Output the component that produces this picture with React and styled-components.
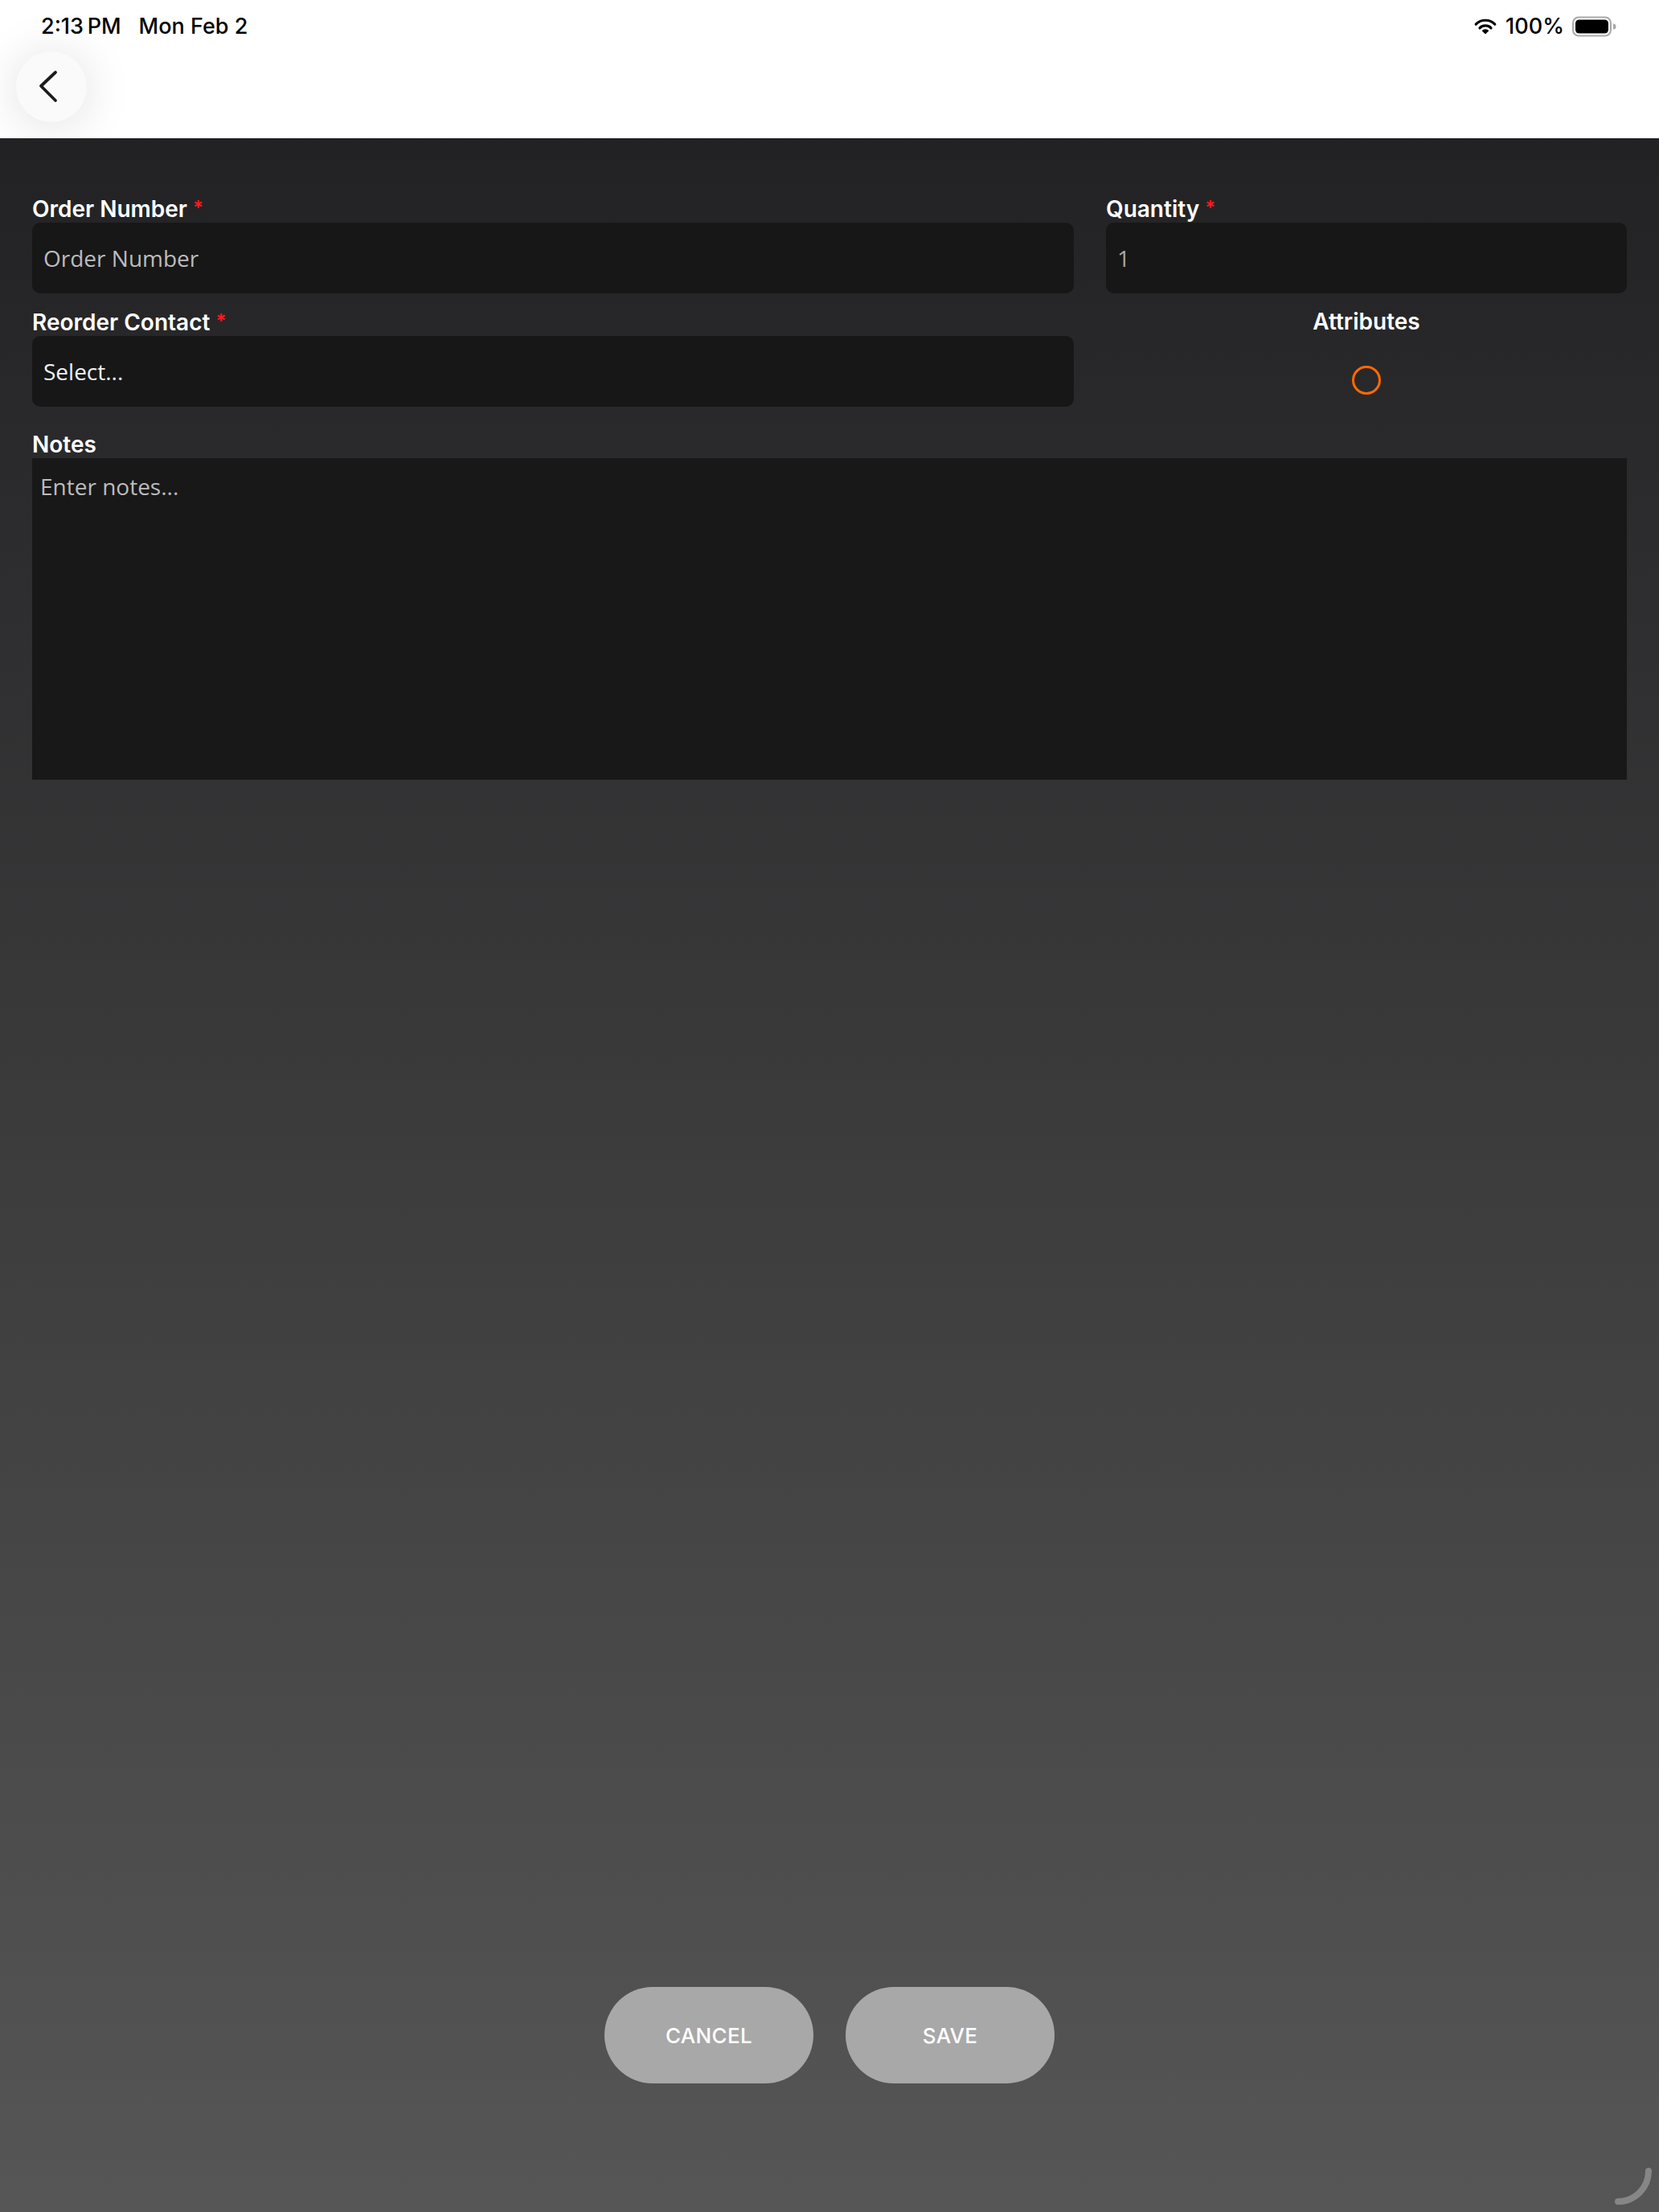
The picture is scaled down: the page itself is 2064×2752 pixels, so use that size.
import React from 'react';
import styled, { createGlobalStyle } from 'styled-components';

const GlobalStyle = createGlobalStyle`
  * {
    box-sizing: border-box;
  }
  html, body {
    margin: 0;
    padding: 0;
    height: 100%;
  }
  body {
    font-family: Inter, 'Noto Sans', sans-serif;
    background: #ffffff;
  }
  #root {
    height: 100%;
  }
`;

export default function App() {
  return (
    <>
      <GlobalStyle />
      <Page>
        <Header>
          <StatusBar>
            <StatusGroup>
              <span>2:13&#8201;PM</span>
              <span>Mon Feb 2</span>
            </StatusGroup>
            <StatusGroup $tight>
              <WifiIcon />
              <span>100%</span>
              <BatteryIcon />
            </StatusGroup>
          </StatusBar>
          <NavRow>
            <BackButton aria-label='Back'>
              <svg width='30' height='44' viewBox='0 0 30 44'>
                <path
                  d='M22 4 L4 21 L22 39'
                  fill='none'
                  stroke='#1c1c1c'
                  strokeWidth='3.8'
                  strokeLinecap='round'
                  strokeLinejoin='round'
                />
              </svg>
            </BackButton>
          </NavRow>
        </Header>

        <Content>
          <Form>
            <FieldRow>
              <Field>
                <Label>
                  Order Number <Required>*</Required>
                </Label>
                <TextInput placeholder='Order Number' />
              </Field>
              <Field>
                <Label>
                  Quantity <Required>*</Required>
                </Label>
                <TextInput defaultValue='1' $muted />
              </Field>
            </FieldRow>

            <FieldRow>
              <Field>
                <Label>
                  Reorder Contact <Required>*</Required>
                </Label>
                <SelectBox>Select...</SelectBox>
              </Field>
              <AttributesBlock>
                <Label $center>Attributes</Label>
                <Ring />
              </AttributesBlock>
            </FieldRow>

            <Field>
              <Label>Notes</Label>
              <NotesArea placeholder='Enter notes...' />
            </Field>
          </Form>

          <Footer>
            <PillButton>CANCEL</PillButton>
            <PillButton>SAVE</PillButton>
          </Footer>

          <CornerArc width='56' height='56' viewBox='0 0 56 56'>
            <path
              d='M47 9 A38 38 0 0 1 9 47'
              fill='none'
              stroke='#868686'
              strokeWidth='8'
              strokeLinecap='round'
            />
          </CornerArc>
        </Content>
      </Page>
    </>
  );
}

function WifiIcon() {
  return (
    <svg width='30' height='21' viewBox='0 0 30 21'>
      <path
        d='M3.2 8.2 A16.5 16.5 0 0 1 26.8 8.2'
        fill='none'
        stroke='#000'
        strokeWidth='3.2'
        strokeLinecap='round'
      />
      <path
        d='M8 12.8 A10 10 0 0 1 22 12.8'
        fill='none'
        stroke='#000'
        strokeWidth='3.2'
        strokeLinecap='round'
      />
      <path d='M15 20.5 L10.6 16.2 A6.2 6.2 0 0 1 19.4 16.2 Z' fill='#000' />
    </svg>
  );
}

function BatteryIcon() {
  return (
    <svg width='56' height='26' viewBox='0 0 56 26'>
      <rect x='1' y='1.5' width='47' height='23' rx='7' fill='none' stroke='#a9a9a9' strokeWidth='2' />
      <rect x='4' y='4.5' width='41' height='17' rx='4.5' fill='#000' />
      <path d='M51 9.5 A3.5 3.5 0 0 1 51 16.5 Z' fill='#a9a9a9' />
    </svg>
  );
}

const Page = styled.div`
  display: flex;
  flex-direction: column;
  height: 100vh;
`;

const Header = styled.header`
  height: 172px;
  flex-shrink: 0;
  background: #ffffff;
`;

const StatusBar = styled.div`
  display: flex;
  justify-content: space-between;
  align-items: flex-start;
  padding: 16px 52px 0 51px;
  height: 64px;
  font-family: Inter, 'Noto Sans', sans-serif;
  font-size: 27px;
  font-weight: 500;
  color: #000;
`;

const StatusGroup = styled.div`
  display: flex;
  align-items: center;
  gap: ${({ $tight }) => ($tight ? '10px' : '22px')};
  line-height: 33px;

  svg {
    display: block;
  }
`;

const NavRow = styled.div`
  display: flex;
  padding-left: 20px;
`;

const BackButton = styled.button`
  display: flex;
  align-items: center;
  justify-content: center;
  width: 88px;
  height: 88px;
  border: none;
  border-radius: 50%;
  background: #fafafa;
  box-shadow: 0 4px 60px rgba(0, 0, 0, 0.13);
  padding: 0 4px 0 0;
  cursor: pointer;
`;

const Content = styled.main`
  position: relative;
  flex: 1;
  display: flex;
  flex-direction: column;
  background: linear-gradient(180deg, #222224 0%, #3a3a3b 45%, #565656 100%);
`;

const Form = styled.div`
  display: flex;
  flex-direction: column;
  gap: 18px;
  padding: 70px 40px 0;
`;

const FieldRow = styled.div`
  display: grid;
  grid-template-columns: 2fr 1fr;
  column-gap: 40px;
  align-items: start;
`;

const Field = styled.div`
  display: flex;
  flex-direction: column;
`;

const Label = styled.label`
  font-family: Inter, 'Noto Sans', sans-serif;
  font-size: 28px;
  font-weight: 600;
  line-height: 34px;
  color: #ffffff;
  text-align: ${({ $center }) => ($center ? 'center' : 'left')};
`;

const Required = styled.span`
  color: #ff1a1a;
  font-size: 24px;
  vertical-align: 3px;
`;

const TextInput = styled.input`
  height: 88px;
  width: 100%;
  padding: 0 14px;
  border: none;
  outline: none;
  border-radius: 10px;
  background: #171717;
  font-family: 'Open Sans', 'Noto Sans', sans-serif;
  font-size: 28px;
  color: ${({ $muted }) => ($muted ? '#a8a8a8' : '#f0f0f0')};

  &::placeholder {
    color: #bcbcbc;
  }
`;

const SelectBox = styled.div`
  display: flex;
  align-items: center;
  height: 88px;
  padding: 0 14px;
  border-radius: 10px;
  background: #171717;
  font-family: 'Open Sans', 'Noto Sans', sans-serif;
  font-size: 28px;
  color: #f2f2f2;
`;

const AttributesBlock = styled.div`
  display: flex;
  flex-direction: column;
  align-items: center;
  padding-bottom: 27px;
`;

const Ring = styled.div`
  width: 36px;
  height: 36px;
  margin-top: 38px;
  border: 3.5px solid #ff6a00;
  border-radius: 50%;
`;

const NotesArea = styled.textarea`
  height: 400px;
  width: 100%;
  resize: none;
  border: none;
  outline: none;
  border-radius: 0;
  padding: 16px 10px;
  background: #181818;
  font-family: 'Open Sans', 'Noto Sans', sans-serif;
  font-size: 28px;
  color: #f0f0f0;

  &::placeholder {
    color: #bcbcbc;
  }
`;

const Footer = styled.div`
  display: flex;
  justify-content: center;
  gap: 40px;
  margin-top: auto;
  padding-bottom: 160px;
`;

const PillButton = styled.button`
  width: 260px;
  height: 120px;
  border: none;
  border-radius: 60px;
  background: #a8a8a8;
  font-family: Inter, 'Noto Sans', sans-serif;
  font-size: 26px;
  font-weight: 500;
  letter-spacing: 0.3px;
  color: #ffffff;
  cursor: pointer;
`;

const CornerArc = styled.svg`
  position: absolute;
  right: 4px;
  bottom: 4px;
`;
